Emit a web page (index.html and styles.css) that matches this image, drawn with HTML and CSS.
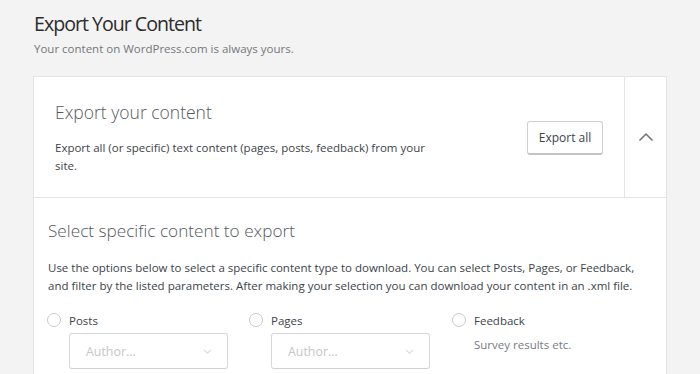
FILE: index.html
```html
<!DOCTYPE html>
<html lang="en">
<head>
<meta charset="utf-8">
<title>Export Your Content</title>
<link rel="stylesheet" href="styles.css">
</head>
<body>
<div class="page">
  <h1 class="title">Export Your Content</h1>
  <p class="subtitle">Your content on WordPress.com is always yours.</p>

  <div class="card">
    <div class="card-header">
      <div class="header-main">
        <div class="header-text">
          <h2 class="heading">Export your content</h2>
          <p class="desc">Export all (or specific) text content (pages, posts, feedback) from your site.</p>
        </div>
        <button class="btn">Export all</button>
      </div>
      <div class="header-toggle">
        <svg width="16" height="10" viewBox="0 0 16 10"><polyline points="1.5,8.5 8,2 14.5,8.5" fill="none" stroke="#6d7176" stroke-width="1.5"/></svg>
      </div>
    </div>

    <div class="card-body">
      <h2 class="heading heading-sm">Select specific content to export</h2>
      <p class="body-text">Use the options below to select a specific content type to download. You can select Posts, Pages, or Feedback, and filter by the listed parameters. After making your selection you can download your content in an .xml file.</p>
      <div class="options">
        <div class="option">
          <label class="radio-row"><span class="radio"></span><span class="radio-label">Posts</span></label>
          <div class="select"><span class="placeholder">Author...</span>
            <svg class="caret" width="9" height="5" viewBox="0 0 9 5"><polyline points="1,0.8 4.5,4.2 8,0.8" fill="none" stroke="#dcdcde" stroke-width="1.1"/></svg>
          </div>
        </div>
        <div class="option">
          <label class="radio-row"><span class="radio"></span><span class="radio-label">Pages</span></label>
          <div class="select"><span class="placeholder">Author...</span>
            <svg class="caret" width="9" height="5" viewBox="0 0 9 5"><polyline points="1,0.8 4.5,4.2 8,0.8" fill="none" stroke="#dcdcde" stroke-width="1.1"/></svg>
          </div>
        </div>
        <div class="option">
          <label class="radio-row"><span class="radio"></span><span class="radio-label">Feedback</span></label>
          <p class="hint">Survey results etc.</p>
        </div>
      </div>
    </div>
  </div>
</div>
</body>
</html>
```
FILE: styles.css
```css
* { box-sizing: border-box; }
html, body { margin: 0; padding: 0; }
body {
  background: #f3f3f3;
  font-family: "Open Sans", "Noto Sans", "Liberation Sans", sans-serif;
  color: #3c434a;
  overflow: hidden;
  height: 374px;
}
.page { padding: 8px 33px 0 33px; width: 700px; }
.title {
  margin: 0;
  padding-left: 1px;
  font-size: 19.6px;
  letter-spacing: -1px;
  line-height: 31px;
  font-weight: 400;
  color: #2c2c2c;
}
.subtitle {
  margin: 1px 0 0;
  padding-left: 1px;
  font-size: 11.5px;
  line-height: 18px;
  color: #73777c;
}
.card {
  margin-top: 18px;
  width: 634px;
  background: #fff;
  border: 1px solid #e4e4e4;
  border-bottom: none;
}
.card-header { display: flex; height: 121px; border-bottom: 1px solid #e4e4e4; }
.header-main {
  flex: 1;
  display: flex;
  align-items: center;
  justify-content: space-between;
  padding: 0 21px 0 21px;
}
.header-text { width: 380px; }
.heading {
  margin: 0;
  font-size: 17.5px;
  line-height: 26px;
  font-weight: 300;
  color: #54595e;
}
.heading-sm { font-size: 17.2px; }
.desc {
  margin: 14px 0 0;
  font-size: 11.5px;
  line-height: 18px;
  color: #3c434a;
}
.btn {
  font-family: inherit;
  font-size: 12px;
  color: #3c434a;
  background: #fff;
  border: 1px solid #cfd0d2;
  border-bottom: 2px solid #c3c4c7;
  border-radius: 3px;
  height: 34px;
  width: 76px;
  padding: 0;
  margin-top: 2px;
}
.header-toggle {
  width: 42px;
  border-left: 1px solid #e4e4e4;
  display: flex;
  align-items: center;
  justify-content: center;
}
.card-body { padding: 20px 22px 0 13px; height: 177px; }
.card-body .heading { padding-left: 1px; }
.body-text {
  margin: 15px 0 0;
  padding-left: 1px;
  font-size: 11.5px;
  line-height: 18px;
  color: #3c434a;
}
.options {
  margin-top: 16px;
  display: grid;
  grid-template-columns: 192px 193px 1fr;
  column-gap: 10px;
}
.radio-row { display: flex; align-items: center; gap: 8px; height: 18px; }
.radio {
  width: 14px; height: 14px;
  border: 1px solid #c9cacc;
  border-radius: 50%;
  background: #fff;
  flex: none;
}
.radio-label { font-size: 11.5px; color: #3c434a; }
.select {
  margin: 4px 0 0 22px;
  width: 159px;
  height: 36px;
  border: 1px solid #d7d8da;
  border-bottom-color: #cfd0d2;
  border-radius: 3px;
  display: flex;
  align-items: center;
  justify-content: space-between;
  padding: 0 15px 0 16px;
}
.placeholder { font-size: 12.4px; color: #c5c6c8; }
.caret { margin-top: 1px; }
.hint {
  margin: 7px 0 0 22px;
  font-size: 11.5px;
  line-height: 18px;
  color: #787c82;
}
```
